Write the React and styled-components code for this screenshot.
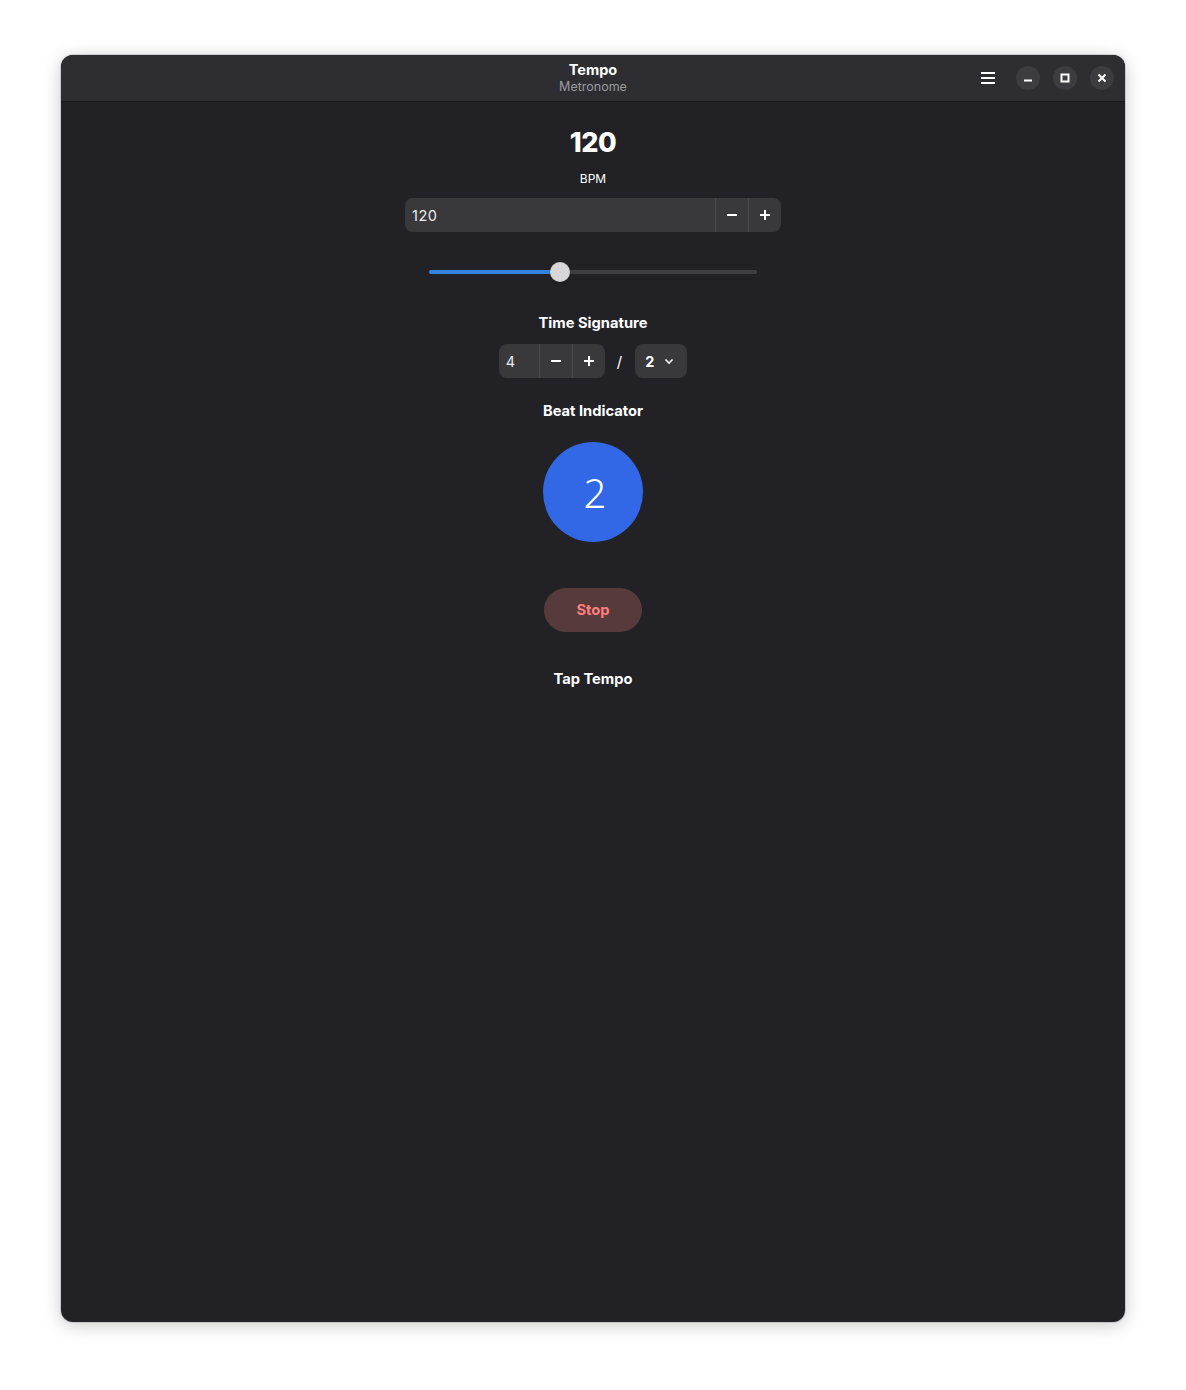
import React, { useState } from 'react';
import styled, { createGlobalStyle } from 'styled-components';

const GlobalStyle = createGlobalStyle`
  html, body {
    margin: 0;
    padding: 0;
    background: #ffffff;
    font-family: Inter, "Noto Sans", sans-serif;
  }
`;

const Page = styled.div`
  display: flex;
  justify-content: center;
  padding: 55px 61px 68px;
  min-height: 1390px;
  box-sizing: border-box;
`;

const Window = styled.div`
  display: flex;
  flex-direction: column;
  width: 1064px;
  height: 1267px;
  border-radius: 12px;
  overflow: hidden;
  background-color: #222226;
  box-shadow: 0 0 0 1px rgba(0, 0, 0, 0.12), 0 3px 18px rgba(0, 0, 0, 0.22);
`;

const HeaderBar = styled.div`
  position: relative;
  display: flex;
  align-items: center;
  justify-content: center;
  height: 46px;
  flex-shrink: 0;
  background-color: #2e2e32;
  box-shadow: 0 1px 0 rgba(0, 0, 0, 0.25);
`;

const TitleBlock = styled.div`
  display: flex;
  flex-direction: column;
  align-items: center;
  padding-bottom: 2px;
`;

const AppTitle = styled.div`
  font-size: 14.5px;
  font-weight: 700;
  line-height: 18px;
  color: #ffffff;
`;

const AppSubtitle = styled.div`
  font-size: 12.5px;
  line-height: 15px;
  color: #9a9a9e;
`;

const HeaderActions = styled.div`
  position: absolute;
  right: 11px;
  top: 0;
  bottom: 0;
  display: flex;
  align-items: center;
  gap: 13px;
`;

const MenuButton = styled.button`
  display: flex;
  align-items: center;
  justify-content: center;
  width: 30px;
  height: 30px;
  border: none;
  background: transparent;
  color: #ffffff;
  padding: 0;
`;

const WindowButton = styled.button`
  display: flex;
  align-items: center;
  justify-content: center;
  width: 24px;
  height: 24px;
  border-radius: 50%;
  border: none;
  padding: 0;
  background-color: #3d3d41;
  color: #ffffff;
`;

const Content = styled.div`
  display: flex;
  flex-direction: column;
  align-items: center;
  flex: 1;
`;

const BigValue = styled.div`
  margin-top: 24px;
  font-size: 27px;
  font-weight: 800;
  line-height: 36px;
  color: #ffffff;
  letter-spacing: -0.5px;
`;

const Unit = styled.div`
  margin-top: 10px;
  font-size: 12px;
  line-height: 16px;
  color: #ffffff;
`;

const SpinBox = styled.div`
  display: flex;
  align-items: stretch;
  margin-top: ${(p) => p.$top || 0}px;
  width: ${(p) => p.$width}px;
  height: 34px;
  border-radius: 8px;
  background-color: #39393c;
  overflow: hidden;
`;

const SpinValue = styled.div`
  flex: 1;
  display: flex;
  align-items: center;
  padding-left: 7px;
  font-size: 14.5px;
  color: #ececec;
  letter-spacing: 0.5px;
`;

const SpinButton = styled.button`
  display: flex;
  align-items: center;
  justify-content: center;
  width: 33px;
  border: none;
  border-left: 1px solid #4b4b4f;
  background: transparent;
  color: #ffffff;
  padding: 0;
`;

const SliderWrap = styled.div`
  position: relative;
  margin-top: 20px;
  width: 328px;
  height: 40px;
`;

const Track = styled.div`
  position: absolute;
  left: 0;
  right: 0;
  top: 18px;
  height: 4px;
  border-radius: 2px;
  background-color: #3f3f43;
`;

const TrackFill = styled.div`
  position: absolute;
  left: 0;
  top: 0;
  bottom: 0;
  border-radius: 2px;
  background-color: #3584e4;
`;

const Knob = styled.div`
  position: absolute;
  top: 10px;
  width: 20px;
  height: 20px;
  margin-left: -10px;
  border-radius: 50%;
  background-color: #d6d6d6;
  box-shadow: 0 1px 2px rgba(0, 0, 0, 0.3);
`;

const SectionLabel = styled.div`
  margin-top: ${(p) => p.$top}px;
  font-size: 14.7px;
  font-weight: 700;
  line-height: 20px;
  color: #ffffff;
`;

const SignatureRow = styled.div`
  display: flex;
  align-items: center;
  margin-top: 11px;
  height: 34px;
`;

const Slash = styled.span`
  margin: 0 13px 0 12px;
  font-size: 15px;
  color: #ffffff;
`;

const Dropdown = styled.button`
  display: flex;
  align-items: center;
  gap: 9px;
  height: 34px;
  width: 52px;
  padding: 0 0 0 10px;
  border: none;
  border-radius: 8px;
  background-color: #39393c;
  color: #ffffff;
  font-family: inherit;
  font-size: 14.5px;
  font-weight: 700;
`;

const BeatCircle = styled.div`
  display: flex;
  align-items: center;
  justify-content: center;
  margin-top: 21px;
  width: 100px;
  height: 100px;
  border-radius: 50%;
  background-color: #3268e5;
  color: #ffffff;
  font-family: "Noto Sans", sans-serif;
  font-size: 40px;
  font-weight: 300;
  padding-left: 4px;
  box-sizing: border-box;
`;

const StopButton = styled.button`
  margin-top: 46px;
  width: 98px;
  height: 44px;
  border: none;
  border-radius: 22px;
  background-color: #573b3c;
  color: #ff7e7e;
  font-family: inherit;
  font-size: 14.7px;
  font-weight: 700;
  padding-bottom: 1px;
`;

const Minus = () => (
  <svg width="12" height="12" viewBox="0 0 12 12">
    <rect x="1" y="5" width="10" height="2" fill="currentColor" />
  </svg>
);

const Plus = () => (
  <svg width="12" height="12" viewBox="0 0 12 12">
    <rect x="1" y="5" width="10" height="2" fill="currentColor" />
    <rect x="5" y="1" width="2" height="10" fill="currentColor" />
  </svg>
);

const App = () => {
  const [bpm] = useState(120);
  const ratio = 131 / 328;

  return (
    <Page>
      <GlobalStyle />
      <Window>
        <HeaderBar>
          <TitleBlock>
            <AppTitle>Tempo</AppTitle>
            <AppSubtitle>Metronome</AppSubtitle>
          </TitleBlock>
          <HeaderActions>
            <MenuButton>
              <svg width="16" height="14" viewBox="0 0 16 14">
                <rect x="1" y="1" width="14" height="2" fill="currentColor" />
                <rect x="1" y="6" width="14" height="2" fill="currentColor" />
                <rect x="1" y="11" width="14" height="2" fill="currentColor" />
              </svg>
            </MenuButton>
            <WindowButton>
              <svg width="10" height="10" viewBox="0 0 10 10">
                <rect x="1" y="6.5" width="8" height="2" fill="currentColor" />
              </svg>
            </WindowButton>
            <WindowButton>
              <svg width="10" height="10" viewBox="0 0 10 10">
                <rect x="1.5" y="1.5" width="7" height="7" fill="none" stroke="currentColor" strokeWidth="2" />
              </svg>
            </WindowButton>
            <WindowButton>
              <svg width="10" height="10" viewBox="0 0 10 10">
                <path d="M1.5 1.5 L8.5 8.5 M8.5 1.5 L1.5 8.5" stroke="currentColor" strokeWidth="2" />
              </svg>
            </WindowButton>
          </HeaderActions>
        </HeaderBar>

        <Content>
          <BigValue>{bpm}</BigValue>
          <Unit>BPM</Unit>
          <SpinBox $top={11} $width={376}>
            <SpinValue>{bpm}</SpinValue>
            <SpinButton><Minus /></SpinButton>
            <SpinButton><Plus /></SpinButton>
          </SpinBox>

          <SliderWrap>
            <Track>
              <TrackFill style={{ width: `${ratio * 100}%` }} />
            </Track>
            <Knob style={{ left: `${ratio * 100}%` }} />
          </SliderWrap>

          <SectionLabel $top={21}>Time Signature</SectionLabel>
          <SignatureRow>
            <SpinBox $width={106}>
              <SpinValue>4</SpinValue>
              <SpinButton><Minus /></SpinButton>
              <SpinButton><Plus /></SpinButton>
            </SpinBox>
            <Slash>/</Slash>
            <Dropdown>
              2
              <svg width="12" height="12" viewBox="0 0 12 12">
                <path d="M2.5 4.5 L6 8 L9.5 4.5" fill="none" stroke="currentColor" strokeWidth="1.6" />
              </svg>
            </Dropdown>
          </SignatureRow>

          <SectionLabel $top={23}>Beat Indicator</SectionLabel>
          <BeatCircle>2</BeatCircle>

          <StopButton>Stop</StopButton>
          <SectionLabel $top={37}>Tap Tempo</SectionLabel>
        </Content>
      </Window>
    </Page>
  );
};

export default App;
